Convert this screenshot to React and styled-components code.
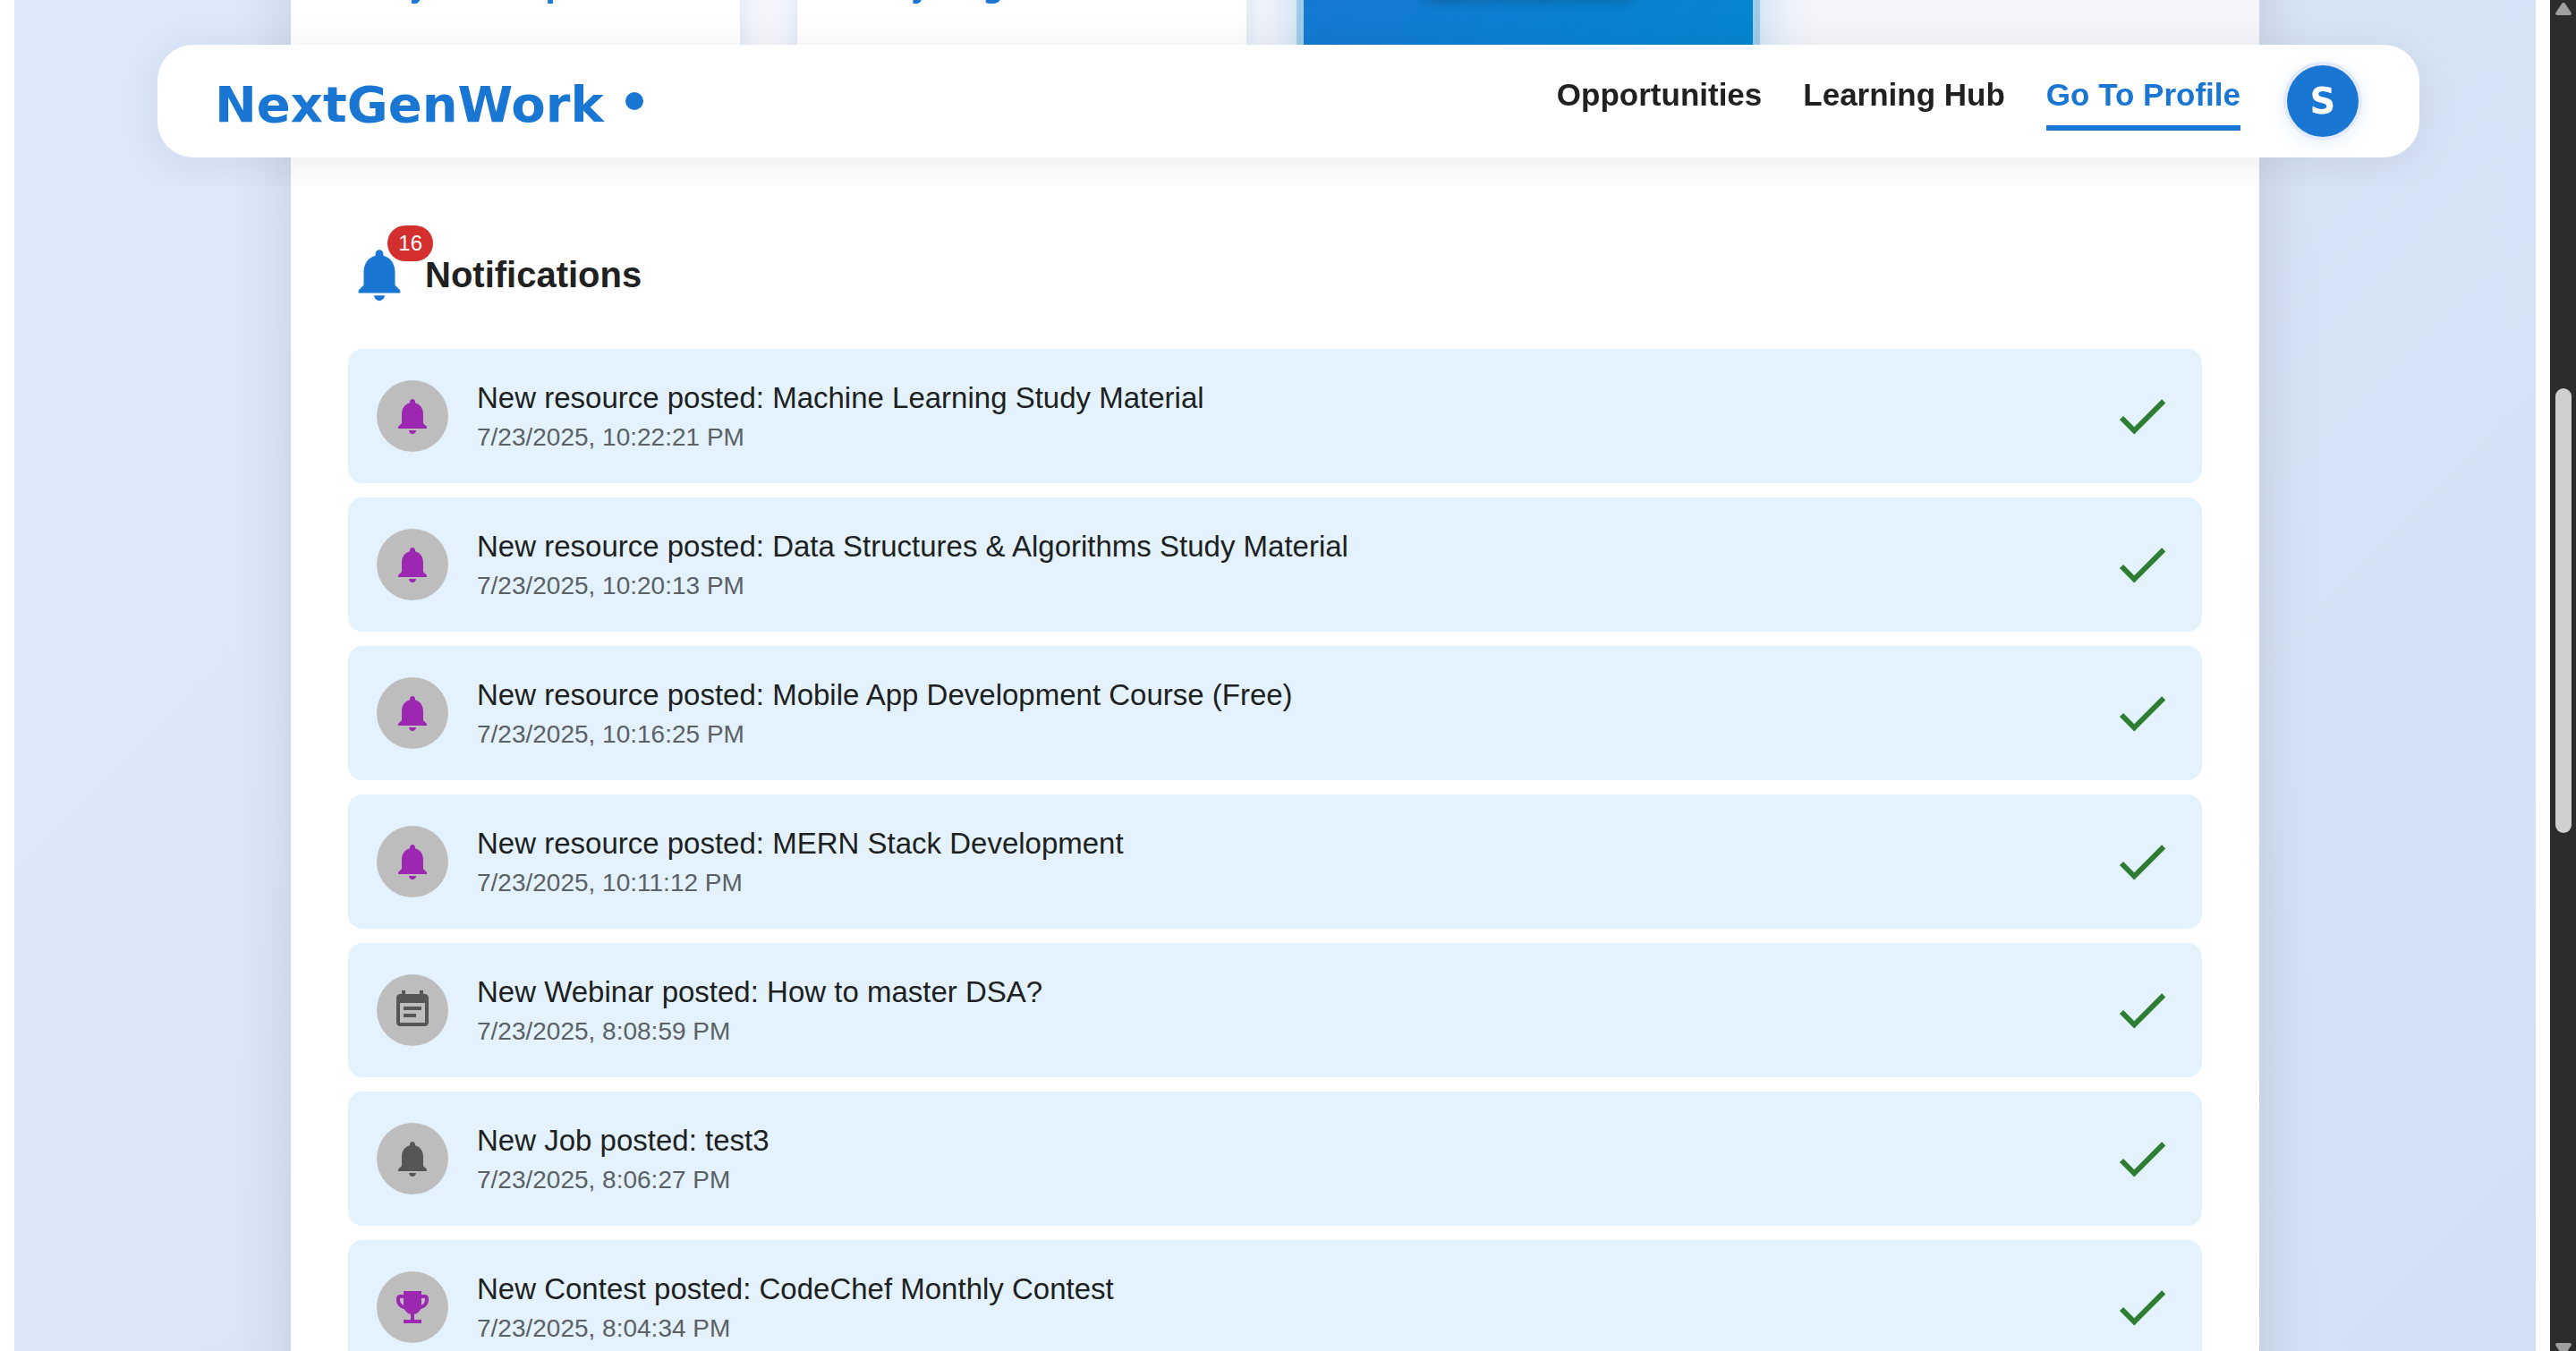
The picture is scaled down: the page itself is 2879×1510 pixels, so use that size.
import React from "react";
import styled, { createGlobalStyle } from "styled-components";

const GlobalStyle = createGlobalStyle`
  *, *::before, *::after { box-sizing: border-box; }
  body {
    margin: 0;
    background: #fff;
    color: #212121;
    font-family: "Liberation Sans", Arial, sans-serif;
  }
  a { color: inherit; text-decoration: none; }
  button { font: inherit; border: 0; padding: 0; background: none; cursor: pointer; }
`;

const heavyFont = `"DejaVu Sans", "Inter", sans-serif`;

const Shell = styled.div`
  display: flex;
  height: 100vh;
  overflow: hidden;
`;

const Page = styled.div`
  flex: 1;
  min-width: 0;
  padding: 0 16px;
`;

const Backdrop = styled.div`
  min-height: 100vh;
  background: linear-gradient(135deg, #dde8fa 0%, #dce7f9 30%, #d1e0f3 100%);
`;

const Panel = styled.main`
  max-width: 2200px;
  min-height: 100vh;
  margin: 0 auto;
  background: #fff;
  box-shadow: 0 16px 64px rgba(0, 0, 0, 0.12);
`;

const Header = styled.header`
  position: fixed;
  z-index: 10;
  top: 50px;
  left: 176px;
  right: 175px;
  display: flex;
  align-items: center;
  justify-content: space-between;
  height: 126px;
  padding: 0 68px 0 64px;
  border-radius: 40px;
  background: #fff;
  box-shadow: 0 6px 48px rgba(0, 0, 0, 0.08);
  clip-path: inset(-50px -64px -32px -64px);
`;

const Logo = styled.a`
  display: flex;
  gap: 24px;
  padding-top: 8px;
  color: #1976d2;
  font-family: ${heavyFont};
  font-size: 56px;
  font-weight: 900;
  line-height: 68px;

  &::after {
    content: "";
    width: 20px;
    height: 20px;
    margin-top: 20px;
    border-radius: 50%;
    background: currentColor;
  }
`;

const Nav = styled.nav`
  display: flex;
  align-items: center;
  gap: 46px;
`;

const NavLink = styled.a`
  padding: 0 0 8px;
  border-bottom: 6px solid ${(p) => (p.$active ? "#1976d2" : "transparent")};
  color: ${(p) => (p.$active ? "#1976d2" : "#212121")};
  font-size: 35px;
  font-weight: 700;
  line-height: 52px;
`;

const Profile = styled.button`
  width: 80px;
  height: 80px;
  margin-left: 6px;
  border-radius: 50%;
  background: #1976d2;
  box-shadow: 0 0 0 4px #e3eafc, 0 4px 24px rgba(25, 118, 210, 0.15);

  && {
    color: #fff;
    font-family: ${heavyFont};
    font-size: 40px;
    font-weight: 900;
    line-height: 80px;
  }
`;

const Tabs = styled.section`
  display: grid;
  grid-template-columns: repeat(4, 1fr);
  gap: 64px;
  margin-top: -120px;
  background: #f5f5fb;
  overflow: hidden;
`;

const Tab = styled.button`
  display: flex;
  justify-content: center;
  height: 232px;
  && { padding-top: 86px; }
  && {
    color: ${(p) => (p.$active ? "#fff" : "#1976d2")};
    background: ${(p) => (p.$active ? "linear-gradient(135deg, #1976d2, #0288d1)" : "#fff")};
    font-family: ${heavyFont};
    font-size: 33px;
    font-weight: 900;
    line-height: 40px;
  }
  text-shadow: ${(p) => (p.$active ? "0 4px 16px rgba(0, 0, 0, 0.4)" : "none")};
  box-shadow: ${(p) =>
    p.$active
      ? "0 0 0 8px #9dcbe8, 0 0 64px rgba(2, 136, 209, 0.3)"
      : "0 0 24px rgba(2, 136, 209, 0.14)"};
`;

const Notifications = styled.section`
  padding: 160px 64px 64px;
`;

const Heading = styled.div`
  display: flex;
  align-items: center;
  gap: 16px;
  margin-bottom: 48px;
`;

const Title = styled.h2`
  margin: 0;
  font-size: 40px;
  font-weight: 700;
  line-height: 48px;
`;

const BadgeAnchor = styled.span`
  position: relative;
  display: flex;
  color: #1976d2;
`;

const Badge = styled.span`
  position: absolute;
  top: -20px;
  right: -25px;
  padding: 0 12px;
  border-radius: 20px;
  background: #d32f2f;
  color: #fff;
  font-size: 24px;
  line-height: 40px;
`;

const List = styled.ul`
  display: flex;
  flex-direction: column;
  gap: 16px;
  margin: 0;
  padding: 0;
  list-style: none;
`;

const Row = styled.li`
  display: flex;
  align-items: center;
  gap: 32px;
  padding: 31px 32px;
  border-radius: 16px;
  background: #e3f2fd;
`;

const Avatar = styled.span`
  display: grid;
  flex: none;
  place-items: center;
  width: 80px;
  height: 80px;
  border-radius: 50%;
  background: #bdbdbd;
  color: ${(p) => (p.$accent ? "#9c27b0" : "#565656")};
`;

const Body = styled.div`
  flex: 1;
  min-width: 0;
`;

const Message = styled.p`
  margin: 0;
  color: #1e2122;
  font-size: 33px;
  line-height: 48px;
`;

const Time = styled.time`
  display: block;
  color: #5b6165;
  font-size: 28px;
  line-height: 40px;
`;

const MarkRead = styled.button`
  display: flex;
  color: #2e7d32;
`;

const Icon = styled.svg`
  display: block;
  width: ${(p) => p.$size}px;
  height: ${(p) => p.$size}px;
  fill: currentColor;
`;

const Scrollbar = styled.div`
  display: flex;
  flex: none;
  flex-direction: column;
  align-items: center;
  width: 29px;
  padding: 3px 0 0;
  background: #2c2c2c;
  color: #9f9f9f;
`;

const Track = styled.div`
  display: flex;
  flex: 1;
  flex-direction: column;
`;

const Thumb = styled.div`
  width: 18px;
  height: 497px;
  margin-top: 417px;
  border-radius: 9px;
  background: #d0d0d0;
`;

const Arrow = styled.svg`
  display: block;
  flex: none;
  width: 18px;
  height: ${(p) => p.$height}px;
  fill: currentColor;
`;

const paths = {
  bell: "M12 22c1.1 0 2-.9 2-2h-4c0 1.1.89 2 2 2zm6-6v-5c0-3.07-1.64-5.64-4.5-6.32V4c0-.83-.67-1.5-1.5-1.5s-1.5.67-1.5 1.5v.68C7.63 5.36 6 7.92 6 11v5l-2 2v1h16v-1l-2-2z",
  event: "M17 10H7v2h10v-2zm2-7h-1V1h-2v2H8V1H6v2H5c-1.11 0-1.99.9-1.99 2L3 19c0 1.1.89 2 2 2h14c1.1 0 2-.9 2-2V5c0-1.1-.9-2-2-2zm0 16H5V8h14v11zm-5-5H7v2h7v-2z",
  trophy: "M19 5h-2V3H7v2H5c-1.1 0-2 .9-2 2v1c0 2.55 1.92 4.63 4.39 4.94.63 1.5 1.98 2.63 3.61 2.96V19H7v2h10v-2h-4v-3.1c1.63-.33 2.98-1.46 3.61-2.96C19.08 12.63 21 10.55 21 8V7c0-1.1-.9-2-2-2zM5 8V7h2v3.82C5.84 10.4 5 9.3 5 8zm14 0c0 1.3-.84 2.4-2 2.82V7h2v1z",
  check: "M9 16.17 4.83 12l-1.42 1.41L9 19 21 7l-1.41-1.41z",
};

function Glyph({ name, size }) {
  return (
    <Icon $size={size} viewBox="0 0 24 24" aria-hidden="true">
      <path d={paths[name]} />
    </Icon>
  );
}

const items = [
  { icon: "bell", accent: true, text: "New resource posted: Machine Learning Study Material", time: "7/23/2025, 10:22:21 PM" },
  { icon: "bell", accent: true, text: "New resource posted: Data Structures & Algorithms Study Material", time: "7/23/2025, 10:20:13 PM" },
  { icon: "bell", accent: true, text: "New resource posted: Mobile App Development Course (Free)", time: "7/23/2025, 10:16:25 PM" },
  { icon: "bell", accent: true, text: "New resource posted: MERN Stack Development", time: "7/23/2025, 10:11:12 PM" },
  { icon: "event", accent: false, text: "New Webinar posted: How to master DSA?", time: "7/23/2025, 8:08:59 PM" },
  { icon: "bell", accent: false, text: "New Job posted: test3", time: "7/23/2025, 8:06:27 PM" },
  { icon: "trophy", accent: true, text: "New Contest posted: CodeChef Monthly Contest", time: "7/23/2025, 8:04:34 PM" },
];

export default function App() {
  return (
    <Shell>
      <GlobalStyle />
      <Header>
        <Logo href="#home">NextGenWork</Logo>
        <Nav>
          <NavLink href="#opportunities">Opportunities</NavLink>
          <NavLink href="#learning">Learning Hub</NavLink>
          <NavLink href="#profile" $active>Go To Profile</NavLink>
          <Profile type="button">S</Profile>
        </Nav>
      </Header>
      <Page>
        <Backdrop>
          <Panel>
            <Tabs>
              <Tab type="button">My Participation</Tab>
              <Tab type="button">My Registrations</Tab>
              <Tab type="button" $active>Notifications</Tab>
            </Tabs>
            <Notifications>
              <Heading>
                <BadgeAnchor>
                  <Glyph name="bell" size={70} />
                  <Badge>16</Badge>
                </BadgeAnchor>
                <Title>Notifications</Title>
              </Heading>
              <List>
                {items.map((item) => (
                  <Row key={item.time}>
                    <Avatar $accent={item.accent}>
                      <Glyph name={item.icon} size={48} />
                    </Avatar>
                    <Body>
                      <Message>{item.text}</Message>
                      <Time>{item.time}</Time>
                    </Body>
                    <MarkRead type="button" aria-label="Mark as read">
                      <Glyph name="check" size={70} />
                    </MarkRead>
                  </Row>
                ))}
              </List>
            </Notifications>
          </Panel>
        </Backdrop>
      </Page>
      <Scrollbar aria-hidden="true">
        <Arrow $height={14} viewBox="0 0 18 14">
          <path d="M9 0c1 0 1.500.5 2 1.200l6.500 9.800c1 1.600 0 3-1.500 3H2c-1.500 0-2.500-1.400-1.500-3L7 1.200C7.500.5 8 0 9 0z" />
        </Arrow>
        <Track>
          <Thumb />
        </Track>
        <Arrow $height={9} viewBox="0 0 18 9">
          <path d="M2 0h14c1.500 0 2.500 1.400 1.500 3L13.500 9h-9L.5 3C-.5 1.400.5 0 2 0z" />
        </Arrow>
      </Scrollbar>
    </Shell>
  );
}
